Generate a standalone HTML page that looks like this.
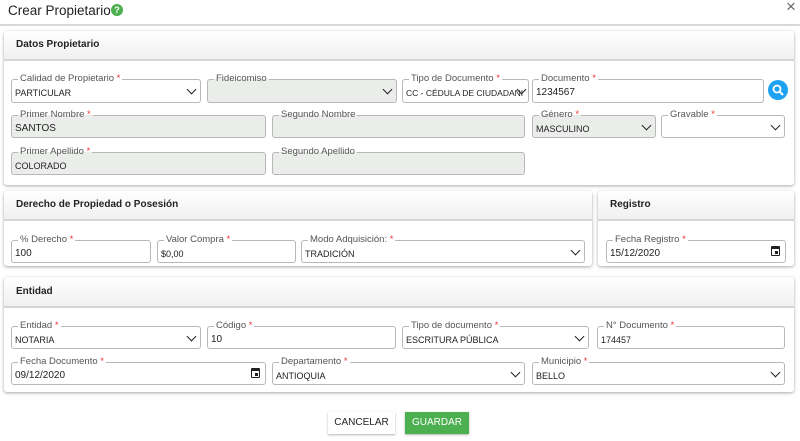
<!DOCTYPE html>
<html><head><meta charset="utf-8"><style>
*{box-sizing:border-box}
body{margin:0;width:800px;height:441px;background:#fff;font-family:"Liberation Sans",sans-serif;position:relative;overflow:hidden;color:#222}
.a{position:absolute}
.card{position:absolute;background:#fff;border-radius:3px;box-shadow:0 1px 3px rgba(0,0,0,.35)}
.hd{position:absolute;left:0;right:0;top:0;background:linear-gradient(#fff,#f0f0f0);border-bottom:2px solid #d5d5d5;font-size:10px;font-weight:bold;padding-left:12px;border-radius:3px 3px 0 0}
fieldset{position:absolute;margin:0;padding:0 3px;border:1px solid #b8b8b8;border-radius:3px;background:#fff;height:26px}
fieldset.d{background:#ebedeb}
legend{font-size:9.5px;color:#555;padding:0 2px;margin-left:3px;line-height:10px}
legend b{color:#e33;font-weight:normal}
.v{font-size:10px;color:#222;position:absolute;left:3px;top:3px;white-space:nowrap}
.v.s{font-size:9px;top:4px}
.ch{position:absolute;right:5px;top:2px;width:7px;height:7px;border-right:1.6px solid #222;border-bottom:1.6px solid #222;transform:rotate(45deg)}
.cal{position:absolute;right:5px;top:1px;width:9px;height:10px;border:1.5px solid #222;border-top-width:3px;border-radius:1px}
.cal:after{content:"";position:absolute;right:1px;bottom:1px;width:3px;height:3px;background:#222}
.btn{position:absolute;font-size:10px;text-align:center;line-height:22px;height:22px;box-shadow:0 1px 2px rgba(0,0,0,.3)}
</style></head><body>
<div class="a" style="left:8px;top:3px;font-size:13.5px;color:#222">Crear Propietario</div>
<div class="a" style="left:111px;top:4px;width:12px;height:12px;border-radius:50%;background:#4caf50;color:#fff;font-size:9px;font-weight:bold;text-align:center;line-height:12px">?</div>
<div class="a" style="left:786px;top:-3px;font-size:17px;color:#666">×</div>
<div class="a" style="left:0;top:24px;width:800px;height:2px;background:#d8d8d8"></div>

<div class="card" style="left:4px;top:31px;width:790px;height:154px">
<div class="hd" style="height:30px;line-height:28px">Datos Propietario</div></div>
<div class="card" style="left:4px;top:191px;width:588px;height:75px">
<div class="hd" style="height:30px;line-height:28px">Derecho de Propiedad o Posesión</div></div>
<div class="card" style="left:598px;top:191px;width:196px;height:75px">
<div class="hd" style="height:30px;line-height:28px">Registro</div></div>
<div class="card" style="left:4px;top:277px;width:790px;height:115px">
<div class="hd" style="height:31px;line-height:30px">Entidad</div></div>

<fieldset style="left:11px;top:74px;width:190px;height:29px"><legend>Calidad de Propietario <b>*</b></legend><span class="v s">PARTICULAR</span><i class="ch"></i></fieldset>
<fieldset class="d" style="left:207px;top:74px;width:190px;height:29px"><legend>Fideicomiso</legend><i class="ch"></i></fieldset>
<fieldset style="left:402px;top:74px;width:127px;height:29px"><legend>Tipo de Documento <b>*</b></legend><span class="v s" style="font-size:8.5px">CC - CÉDULA DE CIUDADANI</span><i class="ch" style="right:3px"></i></fieldset>
<fieldset style="left:532px;top:74px;width:232px;height:29px"><legend>Documento <b>*</b></legend><span class="v">1234567</span></fieldset>
<div class="a" style="left:768px;top:80px;width:20px;height:20px;border-radius:50%;background:#1da1f2"><svg width="20" height="20" viewBox="0 0 20 20"><circle cx="9" cy="9" r="3.5" fill="none" stroke="#fff" stroke-width="1.8"/><path d="M11.5 11.5L15 15" stroke="#fff" stroke-width="2"/></svg></div>

<fieldset class="d" style="left:11px;top:110px;width:255px;height:28px"><legend>Primer Nombre <b>*</b></legend><span class="v">SANTOS</span></fieldset>
<fieldset class="d" style="left:272px;top:110px;width:253px;height:28px"><legend>Segundo Nombre</legend></fieldset>
<fieldset class="d" style="left:532px;top:110px;width:124px;height:28px"><legend>Género <b>*</b></legend><span class="v s">MASCULINO</span><i class="ch"></i></fieldset>
<fieldset style="left:661px;top:110px;width:124px;height:28px"><legend>Gravable <b>*</b></legend><i class="ch"></i></fieldset>

<fieldset class="d" style="left:11px;top:147px;width:255px;height:28px"><legend>Primer Apellido <b>*</b></legend><span class="v s">COLORADO</span></fieldset>
<fieldset class="d" style="left:272px;top:147px;width:253px;height:28px"><legend>Segundo Apellido</legend></fieldset>

<fieldset style="left:11px;top:235px;width:140px;height:28px"><legend>% Derecho <b>*</b></legend><span class="v">100</span></fieldset>
<fieldset style="left:157px;top:235px;width:139px;height:28px"><legend>Valor Compra <b>*</b></legend><span class="v s">$0,00</span></fieldset>
<fieldset style="left:301px;top:235px;width:284px;height:28px"><legend>Modo Adquisición: <b>*</b></legend><span class="v s">TRADICIÓN</span><i class="ch"></i></fieldset>
<fieldset style="left:606px;top:235px;width:180px;height:28px"><legend>Fecha Registro <b>*</b></legend><span class="v">15/12/2020</span><i class="cal"></i></fieldset>

<fieldset style="left:11px;top:321px;width:190px;height:28px"><legend>Entidad <b>*</b></legend><span class="v s">NOTARIA</span><i class="ch"></i></fieldset>
<fieldset style="left:207px;top:321px;width:189px;height:28px"><legend>Código <b>*</b></legend><span class="v">10</span></fieldset>
<fieldset style="left:402px;top:321px;width:187px;height:28px"><legend>Tipo de documento <b>*</b></legend><span class="v s">ESCRITURA PÚBLICA</span><i class="ch"></i></fieldset>
<fieldset style="left:597px;top:321px;width:188px;height:28px"><legend>N° Documento <b>*</b></legend><span class="v s">174457</span></fieldset>

<fieldset style="left:11px;top:357px;width:255px;height:28px"><legend>Fecha Documento <b>*</b></legend><span class="v">09/12/2020</span><i class="cal"></i></fieldset>
<fieldset style="left:272px;top:357px;width:253px;height:28px"><legend>Departamento <b>*</b></legend><span class="v s">ANTIOQUIA</span><i class="ch"></i></fieldset>
<fieldset style="left:532px;top:357px;width:253px;height:28px"><legend>Municipio <b>*</b></legend><span class="v s">BELLO</span><i class="ch"></i></fieldset>

<div class="btn" style="left:328px;top:412px;width:67px;background:#fff;color:#222">CANCELAR</div>
<div class="btn" style="left:405px;top:412px;width:64px;background:#4caf50;color:#fff">GUARDAR</div>
</body></html>
